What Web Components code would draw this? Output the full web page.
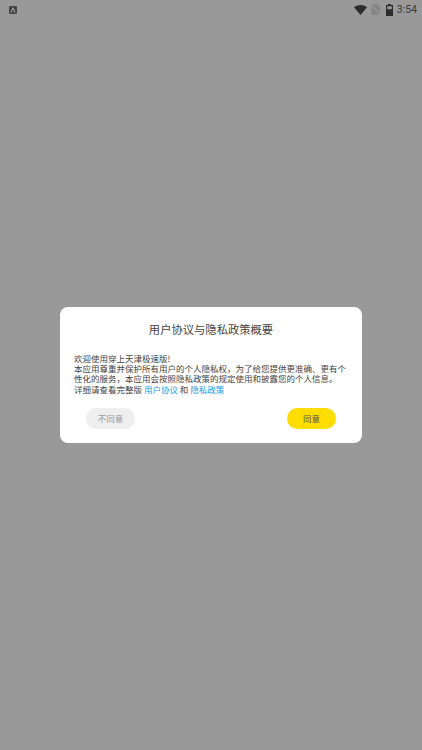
<!DOCTYPE html>
<html lang="zh">
<head>
<meta charset="utf-8">
<title>用户协议与隐私政策概要</title>
<style>
  html, body { margin: 0; height: 100%; }
  body { background: #999999; font-family: "Noto Sans CJK SC", "Noto Sans", sans-serif; }
</style>
</head>
<body>
<app-screen>
  <status-bar slot="status"></status-bar>
  <policy-dialog>
    <span slot="title">用户协议与隐私政策概要</span>
    欢迎使用穿上天津极速版!<br>
    本应用尊重并保护所有用户的个人隐私权，为了给您提供更准确、更有个性化的服务，本应用会按照隐私政策的规定使用和披露您的个人信息。<br>
    详细请查看完整版 <a>用户协议</a> 和 <a>隐私政策</a>
  </policy-dialog>
</app-screen>
<script>
class AppScreen extends HTMLElement {
  constructor() {
    super();
    this.attachShadow({ mode: "open" });
    this.shadowRoot.innerHTML = `
    <style>
      :host { display: flex; flex-direction: column; width: 422px; height: 750px; background: #999; }
      .middle { padding: 288px 60px 0; }
    </style>
    <slot name="status"></slot>
    <div class="middle"><slot></slot></div>`;
  }
}

class StatusBar extends HTMLElement {
  constructor() {
    super();
    this.attachShadow({ mode: "open" });
    this.shadowRoot.innerHTML = `
    <style>
      :host { display: flex; align-items: center; height: 19px; padding: 0 5px 0 9px; color: #3a3a3a; font: 400 10.5px "Roboto", sans-serif; }
      .app { width: 8px; height: 8px; background: #444; border-radius: 1px; display: flex; align-items: center; justify-content: center; }
      .grow { flex: 1; }
      svg { display: block; }
      .sim { margin-left: 4px; }
      .bat { margin-left: 6px; }
      .time { margin-left: 4px; }
    </style>
    <div class="app"><svg width="6" height="6" viewBox="0 0 6 6"><path d="M1 5.5 3 .8 5 5.5" fill="none" stroke="#aaa" stroke-width="1"/></svg></div>
    <div class="grow"></div>
    <svg width="13" height="10" viewBox="0 0 13 10"><path d="M0 2.2C3.6-.7 9.4-.7 13 2.2L6.5 10Z" fill="#2c2c2c"/></svg>
    <svg class="sim" width="9" height="11" viewBox="0 0 9 11"><path d="M.5 0H6L9 3V11H.5Z" fill="#858585"/><path d="M0 0 9 11" stroke="#a0a0a0" stroke-width="1"/></svg>
    <svg class="bat" width="7" height="12" viewBox="0 0 7 12"><path d="M2 0H5V1H7V12H0V1H2Z" fill="#2c2c2c"/><rect x="1.2" y="2.2" width="4.6" height="3" fill="#999"/></svg>
    <span class="time">3:54</span>`;
  }
}

class PolicyDialog extends HTMLElement {
  constructor() {
    super();
    this.attachShadow({ mode: "open" });
    this.shadowRoot.innerHTML = `
    <style>
      :host { display: block; width: 302px; height: 136px; box-sizing: border-box; background: #fff; border-radius: 8px; padding: 14px 14px 0; color: #333; }
      .title { text-align: center; font-size: 11.3px; line-height: 17px; color: #444; }
      .body { margin-top: 15px; font-size: 8.5px; line-height: 10.2px; color: #444; height: 41px; }
      .actions { display: flex; justify-content: space-between; margin-top: 14px; padding: 0 12px; }
      ::slotted(a) { color: #1a9be0; }
    </style>
    <div class="title"><slot name="title"></slot></div>
    <div class="body"><slot></slot></div>
    <div class="actions">
      <pill-button kind="off">不同意</pill-button>
      <pill-button kind="on">同意</pill-button>
    </div>`;
  }
}

class PillButton extends HTMLElement {
  constructor() {
    super();
    this.attachShadow({ mode: "open" });
    this.shadowRoot.innerHTML = `
    <style>
      :host { display: flex; align-items: center; justify-content: center; width: 49px; height: 21px; box-sizing: border-box; padding-bottom: 2px; border-radius: 11px; font-size: 8.5px; }
      :host([kind="off"]) { background: #eeeeee; color: #999; }
      :host([kind="on"]) { background: #ffdd00; color: #555; }
    </style>
    <slot></slot>`;
  }
}

customElements.define("app-screen", AppScreen);
customElements.define("status-bar", StatusBar);
customElements.define("policy-dialog", PolicyDialog);
customElements.define("pill-button", PillButton);
</script>
</body>
</html>
